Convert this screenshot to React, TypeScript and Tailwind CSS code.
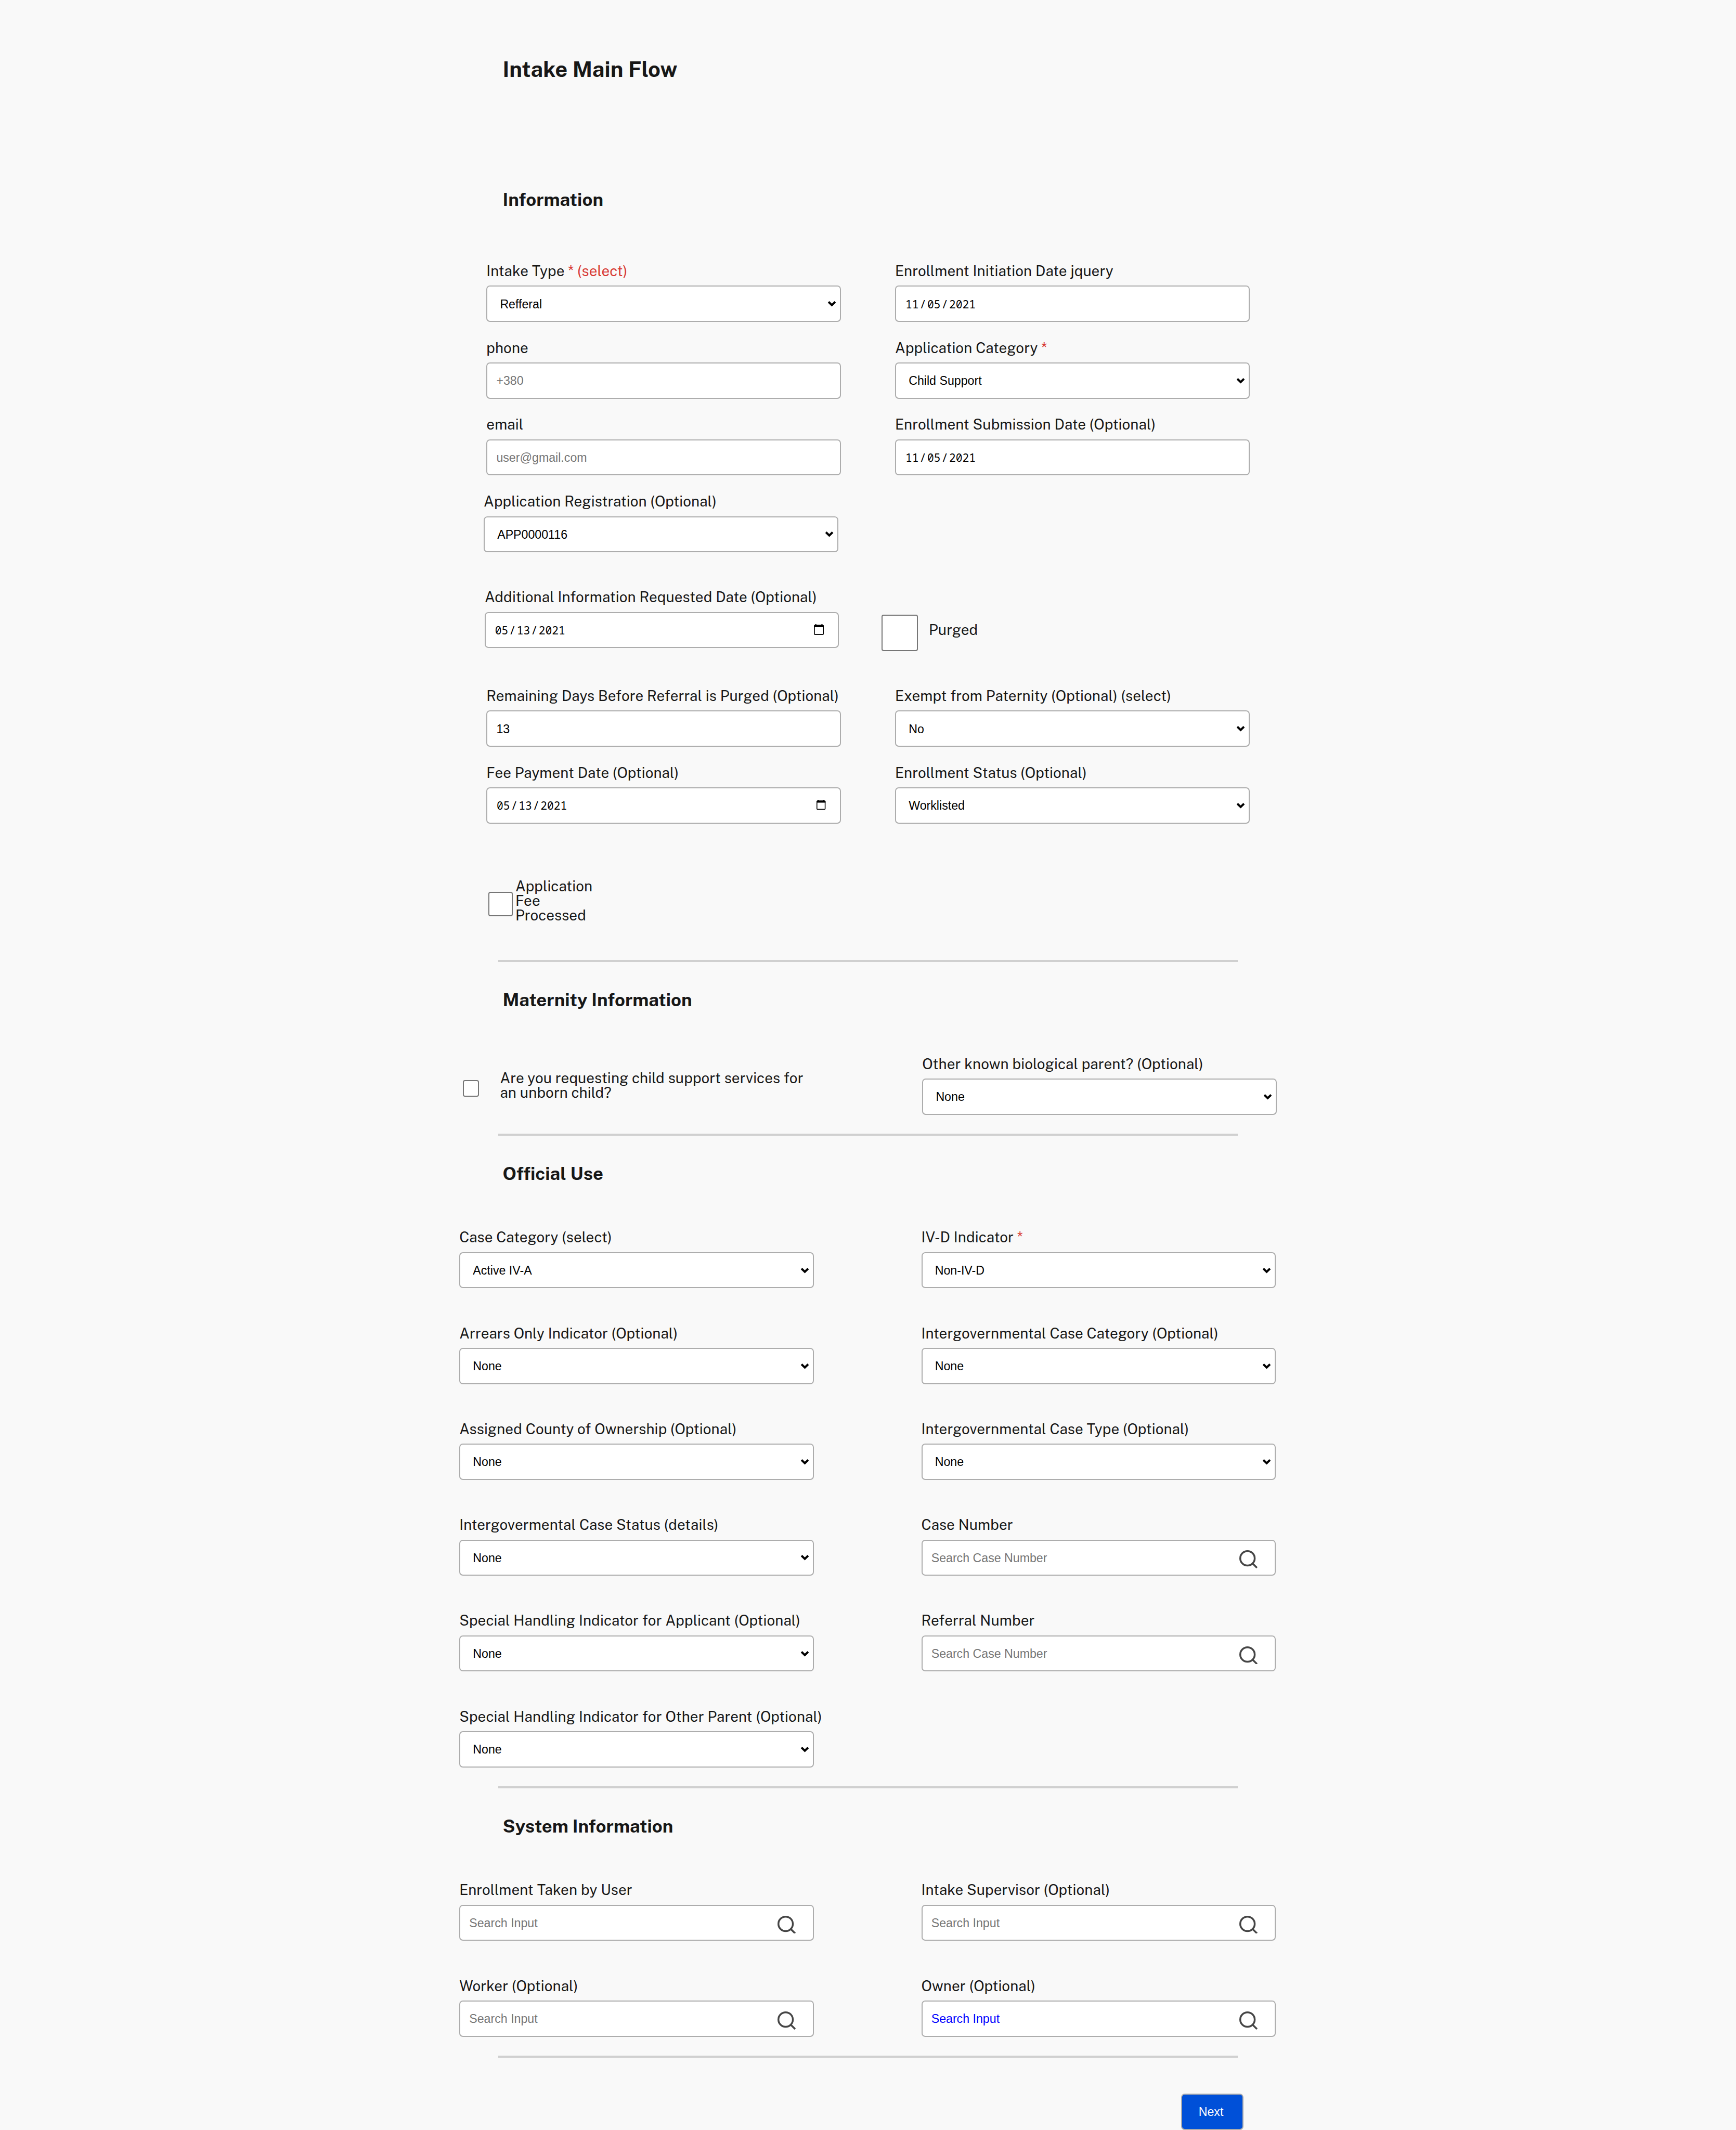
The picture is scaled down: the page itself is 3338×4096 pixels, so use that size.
import type { ReactNode } from "react";

const label =
  "block h-[27.82px] text-[27.82px] leading-[31px] tracking-[0.09px] whitespace-nowrap text-[#171717]";
const box =
  "mt-[15.65px] flex h-[69.54px] w-[681.5px] items-center rounded-[7px] border-2 border-[#adadad] bg-white text-[23.18px] leading-none font-['Liberation_Sans',Arial,sans-serif]";
const check = "shrink-0 rounded-[4px] border-2 border-[#767676] bg-white";
const wrapped = "text-[27.82px] leading-[27.82px] tracking-[0.09px] text-[#171717]";

function Star({ children }: { children?: ReactNode }) {
  return <span className="text-[#d83933]"> *{children}</span>;
}

function Chevron() {
  return (
    <svg className="mr-[6px] ml-auto h-[14px] w-[19.1px]" viewBox="0 0 22 16" fill="none">
      <path d="M3.6 4 11 11.2 18.4 4" stroke="#000" strokeWidth="4.6" />
    </svg>
  );
}

function SearchIcon() {
  return (
    <svg className="mt-[7px] mr-[33px] ml-auto size-[34.8px]" viewBox="0 0 40 40" fill="none">
      <circle cx="18" cy="18" r="16" stroke="#454545" strokeWidth="4" />
      <path d="M29.5 29.5 39 39" stroke="#454545" strokeWidth="4" />
    </svg>
  );
}

function Calendar({ small }: { small?: boolean }) {
  return (
    <svg
      className={small ? "mb-[3px] mr-[27px] ml-auto h-[19.1px] w-[17.4px]" : "mb-[2px] mr-[27px] ml-auto h-[20.9px] w-[19.1px]"}
      viewBox="0 0 22 24"
      preserveAspectRatio="none"
    >
      <rect x="1" y="3" width="20" height="20" rx="1.5" fill="none" stroke="#000" strokeWidth="2" />
      <path d="M1.5 2H20.5L22 3.5V7H0V3.5ZM3 0H5.4V3H3ZM16.6 0H19V3H16.6Z" />
    </svg>
  );
}

function Field({ name, children }: { name: ReactNode; children: ReactNode }) {
  return (
    <div className="w-[681.5px]">
      <span className={label}>{name}</span>
      {children}
    </div>
  );
}

function Select({ name, value }: { name: ReactNode; value: string }) {
  return (
    <Field name={name}>
      <div className={box}>
        <span className="pt-[2px] pl-[24.1px] text-black">{value}</span>
        <Chevron />
      </div>
    </Field>
  );
}

function Input({ name, value, color = "text-[#757575]", search }: { name: string; value: string; color?: string; search?: boolean }) {
  return (
    <Field name={name}>
      <div className={box}>
        <span className={"pt-[2px] pl-[17.1px] " + color}>{value}</span>
        {search && <SearchIcon />}
      </div>
    </Field>
  );
}

function DateInput({ name, value, icon }: { name: string; value: string; icon?: ReactNode }) {
  const [m, d, y] = value.split("/");
  return (
    <Field name={name}>
      <div className={box}>
        <span className="flex gap-[1.9px] pl-[17.8px] text-[21.25px] text-black font-[Consolas,'Noto_Sans_Mono','Liberation_Mono',monospace]">
          <span>{m}</span>
          <span>/</span>
          <span>{d}</span>
          <span>/</span>
          <span>{y}</span>
        </span>
        {icon}
      </div>
    </Field>
  );
}

function Heading({ children }: { children: string }) {
  return (
    <h2 className="ml-[966.5px] h-[34.77px] shrink-0 text-[34.77px] leading-[35.8px] font-bold whitespace-nowrap text-[#171717]">
      {children}
    </h2>
  );
}

function Divider() {
  return <div className="ml-[957.9px] h-[3.48px] w-[1422.1px] shrink-0 bg-[#d0d0d0]" />;
}

export default function App() {
  return (
    <main className="flex h-[4096px] w-[3338px] flex-col overflow-hidden bg-[#f9f9f9] font-['Public_Sans','Libre_Franklin',Inter,sans-serif]">
      <h1 className="mt-[111.8px] ml-[966.5px] h-[41.73px] shrink-0 text-[41.73px] leading-[42.5px] font-bold text-[#171717]">
        Intake Main Flow
      </h1>

      <div className="mt-[212.9px]">
        <Heading>Information</Heading>
      </div>
      <section className="mt-[104.75px] ml-[935.3px] grid grid-cols-[681.5px_681.5px] gap-x-[104.3px] gap-y-[34.77px]">
        <Select name={<>Intake Type<Star> (select)</Star></>} value="Refferal" />
        <DateInput name="Enrollment Initiation Date jquery" value="11/05/2021" />
        <Input name="phone" value="+380" />
        <Select name={<>Application Category<Star /></>} value="Child Support" />
        <Input name="email" value="user@gmail.com" />
        <DateInput name="Enrollment Submission Date (Optional)" value="11/05/2021" />
        <div className="-ml-[5.2px]">
          <Select name="Application Registration (Optional)" value="APP0000116" />
        </div>
      </section>

      <section className="mt-[71.28px] ml-[931.9px] flex items-start">
        <DateInput name="Additional Information Requested Date (Optional)" value="05/13/2021" icon={<Calendar />} />
        <div className={check + " mt-[48.7px] ml-[81.7px] size-[69.54px]"} />
        <span className={label + " mt-[62.6px] ml-[21.5px]"}>Purged</span>
      </section>

      <section className="mt-[71.28px] ml-[935.3px] grid grid-cols-[681.5px_681.5px] gap-x-[104.3px] gap-y-[34.77px]">
        <Input name="Remaining Days Before Referral is Purged (Optional)" value="13" color="text-black" />
        <Select name="Exempt from Paternity (Optional) (select)" value="No" />
        <DateInput name="Fee Payment Date (Optional)" value="05/13/2021" icon={<Calendar small />} />
        <Select name="Enrollment Status (Optional)" value="Worklisted" />
      </section>

      <section className="mt-[106.66px] mb-[72.6px] ml-[938.8px] flex h-[83.46px] items-start">
        <div className={check + " mt-[24.6px] size-[46.9px]"} />
        <span className={wrapped + " mt-[1px] ml-[5.2px] w-[160px]"}>
          Application
          <br />
          Fee
          <br />
          Processed
        </span>
      </section>

      <Divider />
      <div className="mt-[55.37px]">
        <Heading>Maternity Information</Heading>
      </div>
      <section className="mt-[90.67px] mb-[36.5px] ml-[890.1px] flex items-start">
        <div className={check + " mt-[46.9px] size-[31.3px]"} />
        <span className={wrapped + " mt-[29.7px] ml-[40px] w-[811.9px]"}>
          Are you requesting child support services for
          <br />
          an unborn child?
        </span>
        <Select name="Other known biological parent? (Optional)" value="None" />
      </section>

      <Divider />
      <div className="mt-[55.37px]">
        <Heading>Official Use</Heading>
      </div>
      <section className="mt-[90.67px] mb-[36.5px] ml-[883.2px] grid grid-cols-[681.5px_681.5px] gap-x-[206.9px] gap-y-[71.28px]">
        <Select name="Case Category (select)" value="Active IV-A" />
        <Select name={<>IV-D Indicator<Star /></>} value="Non-IV-D" />
        <Select name="Arrears Only Indicator (Optional)" value="None" />
        <Select name="Intergovernmental Case Category (Optional)" value="None" />
        <Select name="Assigned County of Ownership (Optional)" value="None" />
        <Select name="Intergovernmental Case Type (Optional)" value="None" />
        <Select name="Intergovermental Case Status (details)" value="None" />
        <Input name="Case Number" value="Search Case Number" search />
        <Select name="Special Handling Indicator for Applicant (Optional)" value="None" />
        <Input name="Referral Number" value="Search Case Number" search />
        <Select name="Special Handling Indicator for Other Parent (Optional)" value="None" />
      </section>

      <Divider />
      <div className="mt-[55.37px]">
        <Heading>System Information</Heading>
      </div>
      <section className="mt-[90.67px] mb-[36.5px] ml-[883.2px] grid grid-cols-[681.5px_681.5px] gap-x-[206.9px] gap-y-[71.28px]">
        <Input name="Enrollment Taken by User" value="Search Input" search />
        <Input name="Intake Supervisor (Optional)" value="Search Input" search />
        <Input name="Worker (Optional)" value="Search Input" search />
        <Input name="Owner (Optional)" value="Search Input" color="text-[#0000ff]" search />
      </section>

      <Divider />
      <button className="mt-[69.54px] ml-[2270.5px] flex h-[69.54px] w-[120px] shrink-0 items-center justify-center rounded-[7px] border-2 border-[#adadad] bg-[#0050d8] pt-[2px] pr-[4px] text-[23.18px] leading-none text-white font-['Liberation_Sans',Arial,sans-serif]">
        Next
      </button>
    </main>
  );
}
